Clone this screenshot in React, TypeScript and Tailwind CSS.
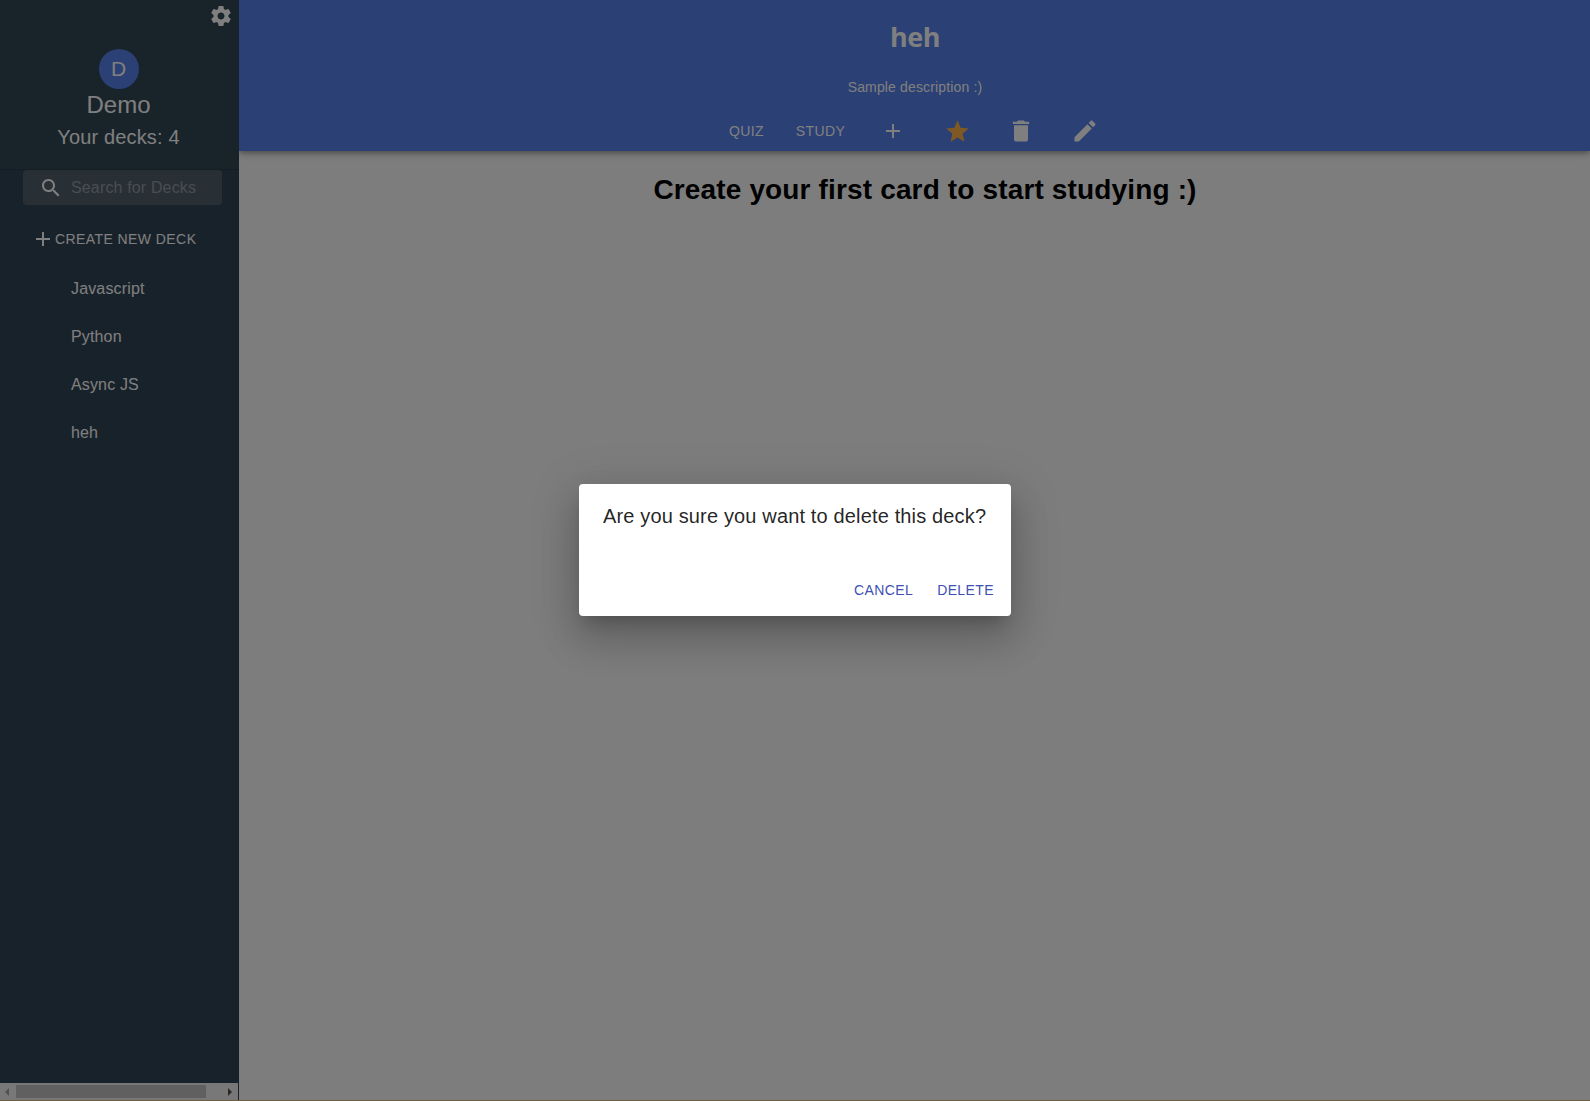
import React from "react";

const paths = {
  gear: "M19.43 12.98c.04-.32.07-.64.07-.98s-.03-.66-.07-.98l2.11-1.65c.19-.15.24-.42.12-.64l-2-3.46c-.12-.22-.39-.3-.61-.22l-2.49 1c-.52-.4-1.08-.73-1.69-.98l-.38-2.65C14.46 2.18 14.25 2 14 2h-4c-.25 0-.46.18-.49.42l-.38 2.65c-.61.25-1.17.59-1.69.98l-2.49-1c-.23-.09-.49 0-.61.22l-2 3.46c-.13.22-.07.49.12.64l2.11 1.65c-.04.32-.07.65-.07.98s.03.66.07.98l-2.11 1.65c-.19.15-.24.42-.12.64l2 3.46c.12.22.39.3.61.22l2.49-1c.52.4 1.08.73 1.69.98l.38 2.65c.03.24.24.42.49.42h4c.25 0 .46-.18.49-.42l.38-2.65c.61-.25 1.17-.59 1.69-.98l2.49 1c.23.09.49 0 .61-.22l2-3.46c.12-.22.07-.49-.12-.64l-2.11-1.65zM12 15.5c-1.93 0-3.5-1.57-3.5-3.5s1.57-3.5 3.5-3.5 3.5 1.57 3.5 3.5-1.57 3.5-3.5 3.5z",
  search: "M15.5 14h-.79l-.28-.27C15.41 12.59 16 11.11 16 9.5 16 5.91 13.09 3 9.5 3S3 5.91 3 9.5 5.91 16 9.5 16c1.61 0 3.09-.59 4.23-1.57l.27.28v.79l5 4.99L20.49 19l-4.99-5zm-6 0C7.01 14 5 11.99 5 9.5S7.01 5 9.5 5 14 7.01 14 9.5 11.99 14 9.5 14z",
  add: "M19 13h-6v6h-2v-6H5v-2h6V5h2v6h6v2z",
  star: "M12 17.27L18.18 21l-1.64-7.03L22 9.24l-7.19-.61L12 2 9.19 8.63 2 9.24l5.46 4.73L5.82 21z",
  trash: "M6 19c0 1.1.9 2 2 2h8c1.1 0 2-.9 2-2V7H6v12zM19 4h-3.5l-1-1h-5l-1 1H5v2h14V4z",
  edit: "M3 17.25V21h3.75L17.81 9.94l-3.75-3.75L3 17.25zM20.71 7.04c.39-.39.39-1.02 0-1.41l-2.34-2.34c-.39-.39-1.02-.39-1.41 0l-1.83 1.83 3.75 3.75 1.83-1.83z",
};

function Icon({ name, className }: { name: keyof typeof paths; className: string }) {
  return (
    <svg viewBox="0 0 24 24" fill="currentColor" className={`shrink-0 ${className}`}>
      <path d={paths[name]} />
    </svg>
  );
}

const decks = ["Javascript", "Python", "Async JS", "heh"];

function Sidebar() {
  return (
    <aside className="relative z-10 flex w-[239px] shrink-0 flex-col bg-[#304455] text-white">
      <div className="flex h-[170px] flex-col items-center border-b border-black/12 bg-[#304654] pr-0.5">
        <div className="flex h-[49px] w-full justify-end pt-1 pr-1">
          <Icon name="gear" className="size-6" />
        </div>
        <div className="flex size-10 items-center justify-center rounded-full bg-[#5680e9] pb-px text-[21px] leading-none">D</div>
        <div className="text-2xl leading-8">Demo</div>
        <div className="text-[20px] leading-8 tracking-[0.15px]">Your decks: 4</div>
      </div>
      <label className="ml-[23px] flex h-[35px] w-[199px] items-center rounded bg-[#50606c] pl-4">
        <Icon name="search" className="size-6" />
        <input
          placeholder="Search for Decks"
          className="ml-2 w-[150px] bg-transparent text-base tracking-[0.15px] outline-none placeholder:text-[#929ba2]"
        />
      </label>
      <button className="mt-4 ml-[31px] flex h-9 items-center text-sm leading-6 tracking-[0.42px]">
        <Icon name="add" className="size-6" />
        CREATE NEW DECK
      </button>
      <ul className="mt-2 grow">
        {decks.map((d) => (
          <li key={d} className="flex h-12 items-center pl-[71px] text-base leading-6 tracking-[0.15px]">
            {d}
          </li>
        ))}
      </ul>
      <div className="flex h-[17px] w-[238px] items-center bg-[#f1f1f1]">
        <div className="flex w-4 justify-center pr-0.5">
          <div className="border-y-4 border-r-4 border-y-transparent border-r-[#a3a3a3]" />
        </div>
        <div className="h-[13px] w-[190px] bg-[#c1c1c1]" />
        <div className="ml-[22px] border-y-4 border-l-4 border-y-transparent border-l-[#505050]" />
      </div>
    </aside>
  );
}

export default function App() {
  return (
    <div className="relative h-[1101px] w-full overflow-hidden bg-[#fafafa] font-['Liberation_Sans',Arial,sans-serif]">
      <div className="flex h-full border-b border-[#dcc078]">
        <Sidebar />
        <main className="flex grow flex-col">
          <header className="flex h-[151px] shrink-0 flex-col items-center bg-[#5680e9] text-white shadow-[0_2px_4px_-1px_rgba(0,0,0,0.2),0_4px_5px_0_rgba(0,0,0,0.14),0_1px_10px_0_rgba(0,0,0,0.12)]">
            <h1 className="mt-[18px] ml-px font-['Open_Sans',sans-serif] text-[27px] leading-[38px] font-bold tracking-[-0.4px]">heh</h1>
            <p className="mt-[21px] ml-px text-sm leading-5 tracking-[0.15px]">Sample description :)</p>
            <nav className="mt-[14px] ml-px flex h-10 items-center text-sm tracking-[0.42px]">
              <button className="w-[67px]">QUIZ</button>
              <button className="w-[81px]">STUDY</button>
              <button className="flex w-16 justify-center"><Icon name="add" className="size-6" /></button>
              <button className="flex w-16 justify-center text-[#ffb347]"><Icon name="star" className="size-[27px]" /></button>
              <button className="flex w-16 justify-center"><Icon name="trash" className="size-7" /></button>
              <button className="flex w-16 justify-center"><Icon name="edit" className="size-7" /></button>
            </nav>
          </header>
          <h2 className="mt-[23px] ml-[21px] text-center text-[28px] leading-8 font-bold tracking-[0.15px] text-black">
            Create your first card to start studying :)
          </h2>
        </main>
      </div>
      <div className="absolute inset-0 z-20 flex items-center justify-center bg-black/50 pb-px">
        <div
          role="dialog"
          className="flex h-[132px] w-[432px] flex-col rounded bg-white shadow-[0_11px_15px_-7px_rgba(0,0,0,0.2),0_24px_38px_3px_rgba(0,0,0,0.14),0_9px_46px_8px_rgba(0,0,0,0.12)]"
        >
          <h2 className="px-6 pt-4 text-[20px] leading-8 tracking-[0.15px] whitespace-nowrap text-black/87">
            Are you sure you want to delete this deck?
          </h2>
          <div className="mt-auto flex justify-end gap-2 py-2 pr-[9px] text-sm leading-6 tracking-[0.4px] text-[#3f51b5]">
            <button className="px-2 py-1.5">CANCEL</button>
            <button className="px-2 py-1.5">DELETE</button>
          </div>
        </div>
      </div>
    </div>
  );
}
